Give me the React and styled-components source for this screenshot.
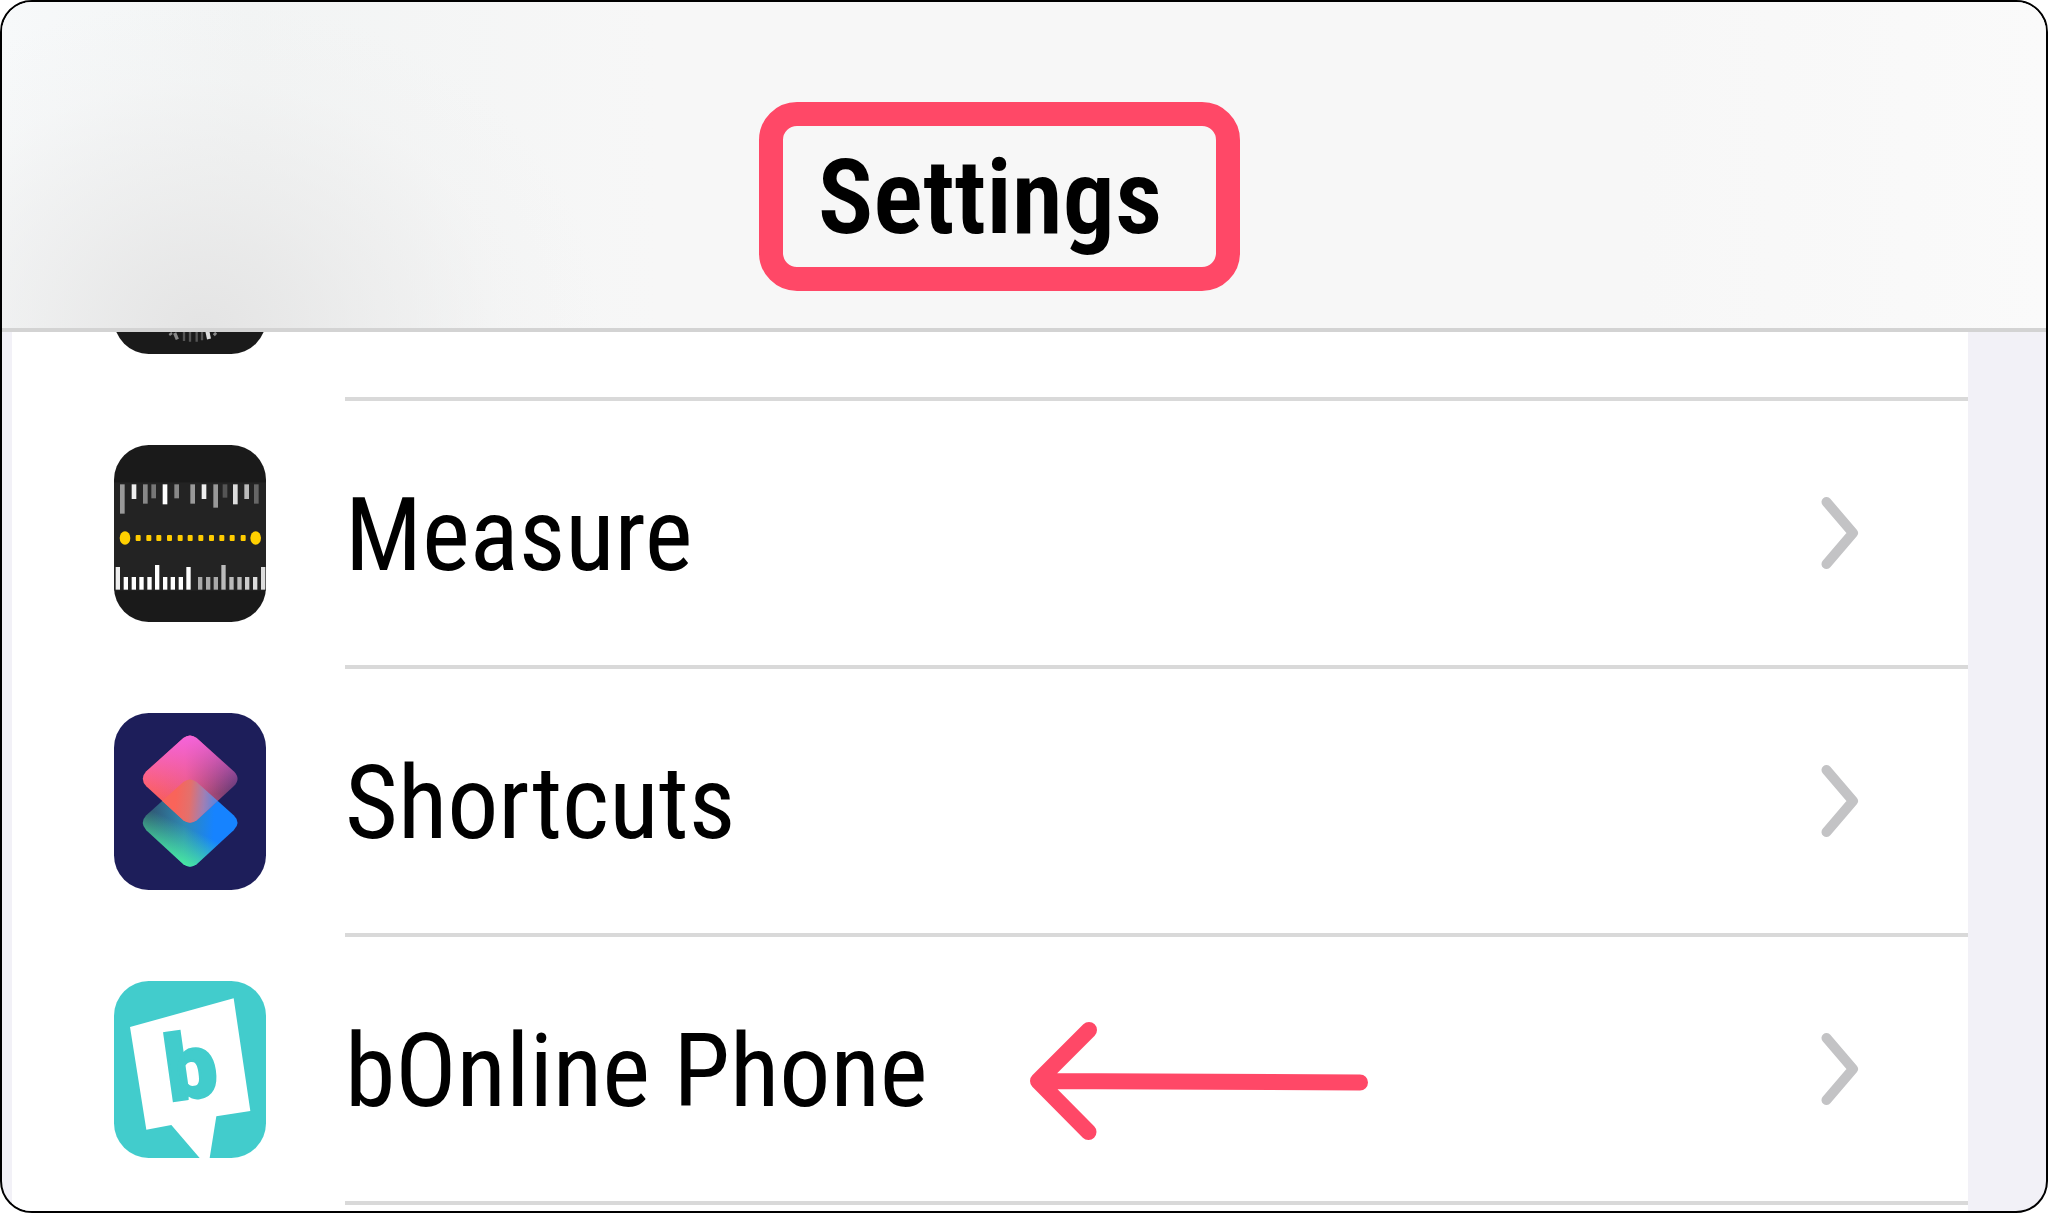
import styled, { createGlobalStyle } from 'styled-components'

const GlobalStyle = createGlobalStyle`
  * {
    box-sizing: border-box;
  }

  body {
    margin: 0;
    background: #fff;
    font-family: "Roboto Condensed", "Liberation Sans Narrow", Roboto, sans-serif;
    color: #000;
  }
`

const Screen = styled.main`
  display: flex;
  flex-direction: column;
  min-height: 100vh;
  border: 2px solid #000;
  border-radius: 32px;
  background: #f2f1f7;
  overflow: hidden;
`

const Header = styled.header`
  display: flex;
  justify-content: center;
  padding: 136px 78px 70px 10px;
  border-bottom: 4px solid #d3d3d3;
  background:
    radial-gradient(ellipse 400px 330px at 200px 100%, #e4e4e4, #e9e9e9aa 40%, #f0f0f044 75%, transparent),
    linear-gradient(90deg, #f7f9fa, #f2f4f4 12%, #f7f7f7 32%, #f7f7f7 80%, #fafafa);
`

const Title = styled.h1`
  position: relative;
  margin: 0;
  font-size: 104px;
  line-height: 120px;
  font-weight: 600;
`

const Highlight = styled.span`
  position: absolute;
  inset: -36px -78px -33px -59px;
  border: 24px solid #ff4867;
  border-radius: 38px;
`

const List = styled.ul`
  flex: 1;
  margin: 0 78px 0 10px;
  padding: 0;
  list-style: none;
  background: #fff;
`

const Row = styled.a`
  display: flex;
  align-items: stretch;
  gap: 79px;
  padding-left: 102px;
  color: inherit;
  text-decoration: none;
`

const IconBox = styled.span`
  display: flex;
  padding: 44px 0 47px;

  svg {
    display: block;
    width: 152px;
    height: 177px;
  }
`

const Body = styled.span`
  position: relative;
  display: flex;
  flex: 1;
  align-items: center;
  justify-content: space-between;
  padding-right: 109px;
  border-bottom: 4px solid #d9d9d9;
`

const Label = styled.span`
  padding-top: 4px;
  font-size: 102px;
  line-height: 120px;
`

// row that is scrolled under the header, only its lower part shows
const PartialRow = styled(Row)`
  height: 69px;
  align-items: flex-end;
  overflow: hidden;

  ${Body} {
    align-self: stretch;
  }
`

const ArrowSvg = styled.svg`
  position: absolute;
  left: 685px;
  top: 85px;
  width: 338px;
  height: 118px;
`

const Chevron = () => (
  <svg width="38" height="74" viewBox="0 0 38 74" aria-hidden="true">
    <path d="M5.500 6L32 37L5.500 68" fill="none" stroke="#c3c3c5" strokeWidth="10" strokeLinecap="round" strokeLinejoin="round" />
  </svg>
)

const Arrow = () => (
  <ArrowSvg viewBox="0 0 338 118" aria-hidden="true">
    <path d="M59 8L8 59L58.500 110M8 59L330 60.500" fill="none" stroke="#ff4867" strokeWidth="16" strokeLinecap="round" strokeLinejoin="round" />
  </ArrowSvg>
)

const topTicks = [
  [18, 88, '#999'], [53, 44, '#eee'], [87, 58, '#888'], [112, 42, '#777'],
  [146, 60, '#fff'], [181, 42, '#888'], [229, 58, '#999'], [263, 44, '#eee'],
  [298, 70, '#999'], [326, 40, '#555'], [357, 60, '#ddd'], [391, 44, '#bbb'],
  [420, 58, '#666'],
]

const bottomTicks = [
  [5, 68, '#eee'], [29, 38, '#fff'], [53, 38, '#fff'], [76, 38, '#fff'], [100, 38, '#fff'],
  [123, 74, '#fff'], [147, 38, '#fff'], [170, 38, '#fff'], [194, 38, '#fff'], [217, 68, '#fff'],
  [252, 38, '#aaa'], [276, 38, '#aaa'], [299, 38, '#aaa'], [322, 74, '#bbb'],
  [346, 38, '#bbb'], [370, 38, '#bbb'], [393, 38, '#ccc'], [417, 38, '#ddd'], [441, 68, '#ddd'],
]

const dots = [65, 97, 127, 159, 191, 221, 253, 285, 316, 347, 380]

const MeasureIcon = () => (
  <svg viewBox="0 0 456 531" aria-hidden="true">
    <clipPath id="measure-clip">
      <rect width="456" height="531" rx="104" />
    </clipPath>
    <g clipPath="url(#measure-clip)">
      <rect width="456" height="531" fill="#1a1a1a" />
      <rect y="112" width="456" height="325" fill="#232323" />
      {topTicks.map(([x, h, fill]) => (
        <rect key={x} x={x} y="118" width="14" height={h} fill={fill} />
      ))}
      {dots.map((x) => (
        <rect key={x} x={x} y="270" width="15" height="18" rx="3" fill="#fc0" />
      ))}
      <ellipse cx="33" cy="279" rx="16" ry="20" fill="#ffd000" />
      <ellipse cx="425" cy="279" rx="16" ry="20" fill="#ffd000" />
      {bottomTicks.map(([x, h, fill]) => (
        <rect key={x} x={x} y={434 - h} width="13" height={h} fill={fill} />
      ))}
    </g>
  </svg>
)

const ShortcutsIcon = () => (
  <svg viewBox="0 0 456 531" aria-hidden="true">
    <defs>
      <linearGradient id="sc-top" x1="90" y1="230" x2="370" y2="220" gradientUnits="userSpaceOnUse">
        <stop offset="0" stopColor="#ff604c" />
        <stop offset="0.450" stopColor="#ec5a7c" />
        <stop offset="1" stopColor="#5b3872" />
      </linearGradient>
      <linearGradient id="sc-pink" x1="220" y1="66" x2="240" y2="250" gradientUnits="userSpaceOnUse">
        <stop offset="0" stopColor="#f564dc" />
        <stop offset="1" stopColor="#f564dc" stopOpacity="0" />
      </linearGradient>
      <linearGradient id="sc-bottom" x1="100" y1="180" x2="350" y2="188" gradientUnits="userSpaceOnUse">
        <stop offset="0" stopColor="#30546f" />
        <stop offset="0.450" stopColor="#2f89b4" />
        <stop offset="0.800" stopColor="#1683ff" />
      </linearGradient>
      <linearGradient id="sc-green" x1="200" y1="330" x2="250" y2="225" gradientUnits="userSpaceOnUse">
        <stop offset="0" stopColor="#4af0a0" />
        <stop offset="1" stopColor="#4af0a0" stopOpacity="0" />
      </linearGradient>
      <linearGradient id="sc-mix" x1="185" y1="130" x2="305" y2="140" gradientUnits="userSpaceOnUse">
        <stop offset="0" stopColor="#f9645a" />
        <stop offset="0.350" stopColor="#e4706c" />
        <stop offset="0.700" stopColor="#a07fb4" />
        <stop offset="1" stopColor="#5b85e0" />
      </linearGradient>
      <path id="sc-tile" d="M208 75Q228 60 248 75L359 175Q382 197 359 220L248 322Q228 336 208 322L97 220Q76 197 97 175Z" />
      <clipPath id="sc-clip">
        <use href="#sc-tile" />
      </clipPath>
    </defs>
    <rect width="456" height="531" rx="104" fill="#1d1e5a" />
    <use href="#sc-tile" y="132" fill="url(#sc-bottom)" />
    <use href="#sc-tile" y="132" fill="url(#sc-green)" />
    <use href="#sc-tile" fill="url(#sc-top)" />
    <use href="#sc-tile" fill="url(#sc-pink)" />
    <g clipPath="url(#sc-clip)">
      <use href="#sc-tile" y="132" fill="url(#sc-mix)" />
    </g>
  </svg>
)

const BonlineIcon = () => (
  <svg viewBox="0 0 456 531" aria-hidden="true">
    <rect width="456" height="531" rx="104" fill="#42cccc" />
    <path d="M48 138L359 52L409 390L307 406L287 531H257L172 432L97 446Z" fill="#fff" />
    <text
      x="167"
      y="361"
      transform="rotate(-8 167 361)"
      fill="#42cccc"
      stroke="#42cccc"
      strokeWidth="8"
      fontFamily="Roboto, sans-serif"
      fontSize="272"
      fontWeight="900"
    >
      b
    </text>
  </svg>
)

const CompassIcon = () => (
  <svg viewBox="0 0 456 531" aria-hidden="true">
    <rect width="456" height="531" rx="104" fill="#1a1a1a" />
    <path d="M182 468L190 487M168 468L172 474M300 468L306 474" stroke="#888" strokeWidth="10" />
    <path d="M210 465V492M228 465V494M248 465V494M264 465V490" stroke="#555" strokeWidth="7" />
    <path d="M280 462L285 486" stroke="#ddd" strokeWidth="12" />
  </svg>
)

const apps = [
  { name: 'Measure', icon: <MeasureIcon /> },
  { name: 'Shortcuts', icon: <ShortcutsIcon /> },
  { name: 'bOnline Phone', icon: <BonlineIcon />, pointed: true },
]

const App = () => {
  return (
    <>
      <GlobalStyle />
      <Screen>
        <Header>
          <Title>
            Settings
            <Highlight />
          </Title>
        </Header>
        <List>
          <li>
            <PartialRow as="div">
              <IconBox>
                <CompassIcon />
              </IconBox>
              <Body />
            </PartialRow>
          </li>
          {apps.map(({ name, icon, pointed }) => (
            <li key={name}>
              <Row href="#">
                <IconBox>{icon}</IconBox>
                <Body>
                  <Label>{name}</Label>
                  {pointed && <Arrow />}
                  <Chevron />
                </Body>
              </Row>
            </li>
          ))}
        </List>
      </Screen>
    </>
  )
}

export default App
